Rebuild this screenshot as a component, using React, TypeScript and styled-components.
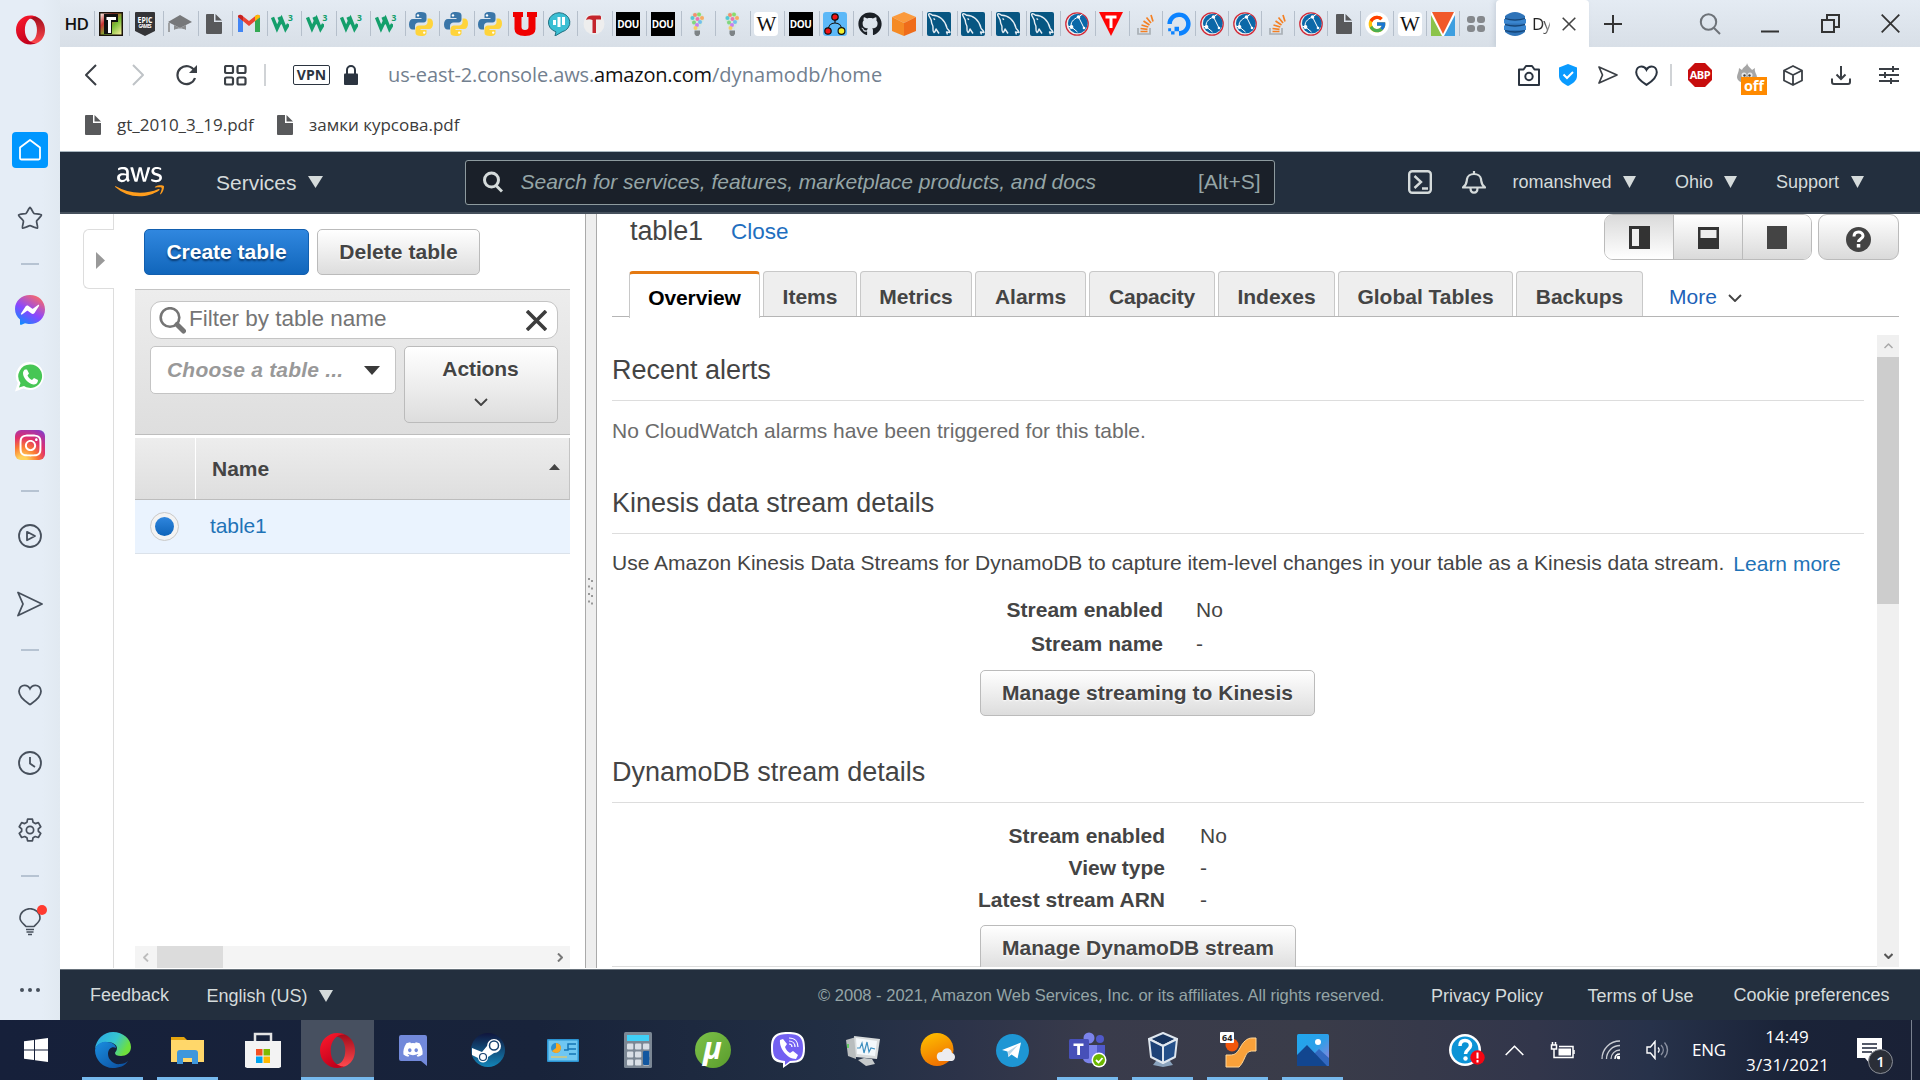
import React from "react";
import styled, { createGlobalStyle, css } from "styled-components";
import { FaAws, FaDiscord, FaGithub, FaInstagram, FaDigitalOcean } from "react-icons/fa";
import { FcGoogle } from "react-icons/fc";

const ARIAL = '"Liberation Sans", Arial, sans-serif';
const SEGOE = '"Open Sans", "Noto Sans", sans-serif';

const GlobalStyle = createGlobalStyle`
  *, *::before, *::after { box-sizing: border-box; }
  body { margin: 0; background: #fff; overflow: hidden; }
  svg { display: block; flex: none; }
`;

/* ---------- shell ---------- */

const Screen = styled.div`
  width: 1920px; height: 1080px; display: flex; flex-direction: column;
  overflow: hidden; font-family: ${ARIAL}; white-space: nowrap; color: #444;
`;
const BrowserWindow = styled.div`
  height: 1020px; display: flex; background: linear-gradient(#e4ebf3, #e5ecf5);
`;
const BrowserMain = styled.div`
  flex: 1; min-width: 0; display: flex; flex-direction: column;
`;

/* ---------- opera sidebar ---------- */

const SideBar = styled.nav`
  width: 60px; height: 1020px; display: flex; flex-direction: column; align-items: center;
  background: linear-gradient(90deg, #e5edf6 70%, #e1e9f1);
`;
const SideSlot = styled.div<{ $h: number }>`
  position: relative; width: 60px; height: ${p => p.$h}px; flex: none;
  display: flex; align-items: center; justify-content: center; color: #47505c;
`;
const SideRule = styled.i`
  width: 18px; height: 2px; background: #b6c3d2;
`;
const HomeTile = styled.div`
  width: 36px; height: 36px; margin: 72px 0 18px; flex: none; border-radius: 4px; background: #0097ff;
  display: flex; align-items: center; justify-content: center;
`;
const InstaTile = styled.div`
  width: 30px; height: 30px; border-radius: 6px; color: #fff;
  display: flex; align-items: center; justify-content: center;
  background: radial-gradient(circle at 25% 105%, #ffd35a 0 12%, #fb7a33 38%, #e0306c 62%, #9b36b7 88%, #5b57d3);
`;
const AlertDot = styled.i`
  position: absolute; top: 16px; left: 37px; width: 10px; height: 10px; border-radius: 50%; background: #ff3b30;
`;

/* ---------- tab strip ---------- */

const TabStrip = styled.div`
  height: 47px; display: flex; background: linear-gradient(#e4ebf3, #d8dfe7);
`;
const PinnedTab = styled.div<{ $w: number; $rule?: boolean }>`
  width: ${p => p.$w}px; height: 25px; margin-top: 11px; flex: none; display: flex; align-items: center;
  padding-left: 3.5px;
  border-left: ${p => (p.$rule === false ? "0" : "1.5px")} solid #b5bfcb;
`;
const PinnedText = styled.span`
  padding-left: 1px; font: 600 17px/25px ${SEGOE}; letter-spacing: -0.8px; color: #111;
`;
const ActiveTab = styled.div`
  width: 93px; height: 47px; background: #fff; border-radius: 4px 4px 0 0; display: flex; align-items: center;
  padding-left: 8px; box-shadow: -2px 0 4px rgba(160, 175, 190, .35);
`;
const ActiveTitle = styled.span`
  width: 18px; margin: 0 12px 0 6px; overflow: hidden; font: 17px/26px ${SEGOE}; letter-spacing: -1px;
  background: linear-gradient(90deg, #222 50%, #999); -webkit-background-clip: text; color: transparent;
`;
const WindowButtons = styled.div`
  flex: 1; display: flex; align-items: center; color: #333;
`;
const Gap = styled.i<{ $w: number }>`
  width: ${p => p.$w}px; flex: none;
`;
const FavText = styled.b<{ $bg: string; $fg: string; $size: number; $r?: number; $serif?: boolean; $regular?: boolean }>`
  width: 24px; height: 24px; flex: none; display: block; text-align: center; overflow: hidden;
  background: ${p => p.$bg}; color: ${p => p.$fg}; border-radius: ${p => p.$r || 0}px;
  font: ${p => (p.$regular ? 400 : 700)} ${p => p.$size}px/24px ${p => (p.$serif ? '"Liberation Serif", serif' : SEGOE)};
  letter-spacing: ${p => (p.$size < 11 ? "-0.4px" : "-1px")};
`;
const FavW3 = styled.span`
  width: 24px; height: 24px; flex: none; display: flex; color: #149f6b;
  sup { font: 700 8.5px/12px ${SEGOE}; margin-left: -1px; }
`;

/* ---------- address bar ---------- */

const AddressBar = styled.div`
  height: 56px; background: #fff; display: flex; align-items: center; color: #3a3f45;
`;
const BarRule = styled.i`
  width: 2px; height: 22px; background: #d0d3d6; flex: none;
`;
const VpnBadge = styled.span`
  width: 37px; height: 20px; border: 1.5px solid #2b3440; border-radius: 2px; text-align: center;
  font: 700 14px/17px ${SEGOE}; letter-spacing: 0; color: #2b3440;
`;
const Url = styled.span`
  font: 20px/30px ${SEGOE}; letter-spacing: -0.12px; color: #72808f; width: 1130px;
  b { font-weight: 400; color: #111; letter-spacing: -0.2px; }
  i { font-style: normal; letter-spacing: 0.07px; }
`;
const AbpBadge = styled.span`
  width: 24px; height: 24px; background: #c70d0d; color: #fff; text-align: center;
  clip-path: polygon(29% 0, 71% 0, 100% 29%, 100% 71%, 71% 100%, 29% 100%, 0 71%, 0 29%);
  font: 700 11px/24px ${SEGOE}; letter-spacing: -0.4px;
`;
const FlameSlot = styled.span`
  position: relative; width: 30px; height: 32px; flex: none; padding-top: 4px;
`;
const OffBadge = styled.b`
  position: absolute; left: 4px; top: 18px; width: 26px; height: 18px; background: #ff8a00; color: #fff;
  text-align: center; font: 700 14.5px/17px ${SEGOE};
`;
const Bookmarks = styled.div`
  height: 48px; background: #fff; display: flex; align-items: center; padding: 0 0 4px 25px;
`;
const Bookmark = styled.span<{ $w: number }>`
  width: ${p => p.$w}px; display: flex; align-items: center; gap: 16px;
  font: 17px/26px ${SEGOE}; letter-spacing: 0; color: #3b3b3b;
`;

/* ---------- aws header / footer ---------- */

const AwsHeader = styled.header`
  height: 63px; background: #232f3e; border-top: 1px solid #a9b7c0; border-bottom: 2px solid #46515d;
  display: flex; align-items: center; color: #d5dbdb; font-size: 18px;
`;
const NavLabel = styled.span<{ $size: number; $w: number; $drop?: number }>`
  width: ${p => p.$w}px; font-size: ${p => p.$size}px; line-height: 30px; padding-top: ${p => p.$drop || 0}px;
`;
const SearchBox = styled.div`
  width: 810px; height: 45px; background: #1a2029; border: 1px solid #8d9a9e; border-radius: 3px;
  display: flex; align-items: center; color: #95a5a6; font-size: 21px; line-height: 30px; padding: 0 13px 0 17px;
  svg { margin-bottom: 1px; }
  em { flex: 1; margin-left: 18px; letter-spacing: -0.02px; }
`;
const AwsFooter = styled.footer`
  height: 51px; background: #232f3e; border-top: 1px solid #69737c; color: #d5dbdb;
  display: flex; padding: 9px 0 0 30px; font-size: 18px; line-height: 32px;
`;
const FooterLabel = styled.span<{ $w: number; $up?: boolean }>`
  width: ${p => p.$w}px; padding-top: ${p => (p.$up ? 0 : 1)}px;
`;
const FooterCaret = styled.span`
  width: 14px; padding-top: 11px;
`;
const Copyright = styled.small`
  width: 613px; font-size: 16.5px; color: #95a5a6; letter-spacing: 0.01px; padding-top: 0;
`;

/* ---------- console body ---------- */

const Console = styled.main`
  height: 755px; background: #fff; display: flex; overflow: hidden; font-size: 21px;
`;
const Rail = styled.div`
  width: 54px; height: 754px; display: flex; flex-direction: column;
`;
const RailEdge = styled.i<{ $h?: number }>`
  ${p => (p.$h ? css`height: ${p.$h}px;` : css`flex: 1;`)}
  border-right: 1px solid #ddd;
`;
const RailHandle = styled.div`
  height: 60px; margin-left: 23px; border: 1.5px solid #ddd; border-right: 0; border-radius: 6px 0 0 6px;
  padding: 22px 0 0 12px;
`;
const ListPane = styled.section`
  width: 471px; height: 754px; padding: 15px 15px 0 21px; display: flex; flex-direction: column;
`;
const ButtonRow = styled.div`
  display: flex; gap: 8px; height: 60px; padding-left: 9px; flex: none;
`;
const Button = styled.button<{ $w: number; $h?: number; $primary?: boolean; $ls?: number }>`
  width: ${p => p.$w}px; height: ${p => p.$h || 46}px; flex: none; padding: 0; border-radius: 5px;
  display: flex; flex-direction: column; align-items: center;
  font: 700 21px/44px ${ARIAL}; letter-spacing: ${p => p.$ls || 0}px;
  ${p => p.$primary
    ? css`color: #fff; border: 1px solid #125faf; background: linear-gradient(#3087df, #1166bb); text-shadow: 0 2px 2px #0a3a70;`
    : css`color: #444; border: 1px solid #bbb; background: linear-gradient(#fff, #ddd); text-shadow: 0 1px 2px #fff;`}
`;
const FilterPanel = styled.div`
  height: 146px; flex: none; border-top: 1px solid #c4c4c4; border-bottom: 1px solid #bdbdbd;
  background: linear-gradient(#ededed, #dedede); padding: 11px 12px 0 15px;
`;
const FilterInput = styled.div`
  height: 38px; border: 1px solid #c4c4c4; border-radius: 11px; background: #fff; display: flex; align-items: center;
  padding: 0 10px 0 8px; font-size: 22.5px; color: #757575;
  span { flex: 1; margin-left: 3px; padding-bottom: 2px; }
`;
const FilterRow = styled.div`
  display: flex; gap: 8px; margin-top: 7px;
`;
const Select = styled.div`
  width: 246px; height: 48px; border: 1px solid #c4c4c4; border-radius: 5px; background: #fff;
  display: flex; align-items: center; padding: 0 15px 0 16px;
  font: italic 700 21px/46px ${ARIAL}; letter-spacing: .2px; color: #999;
  span { flex: 1; }
`;
const ActionsButton = styled(Button)`
  line-height: 44px; padding-right: 1px;
  svg { margin-top: 7px; }
`;
const TableHead = styled.div`
  height: 62px; flex: none; margin-top: 3px; border-bottom: 1px solid #bdbdbd; border-right: 1px solid #c4c4c4;
  background: linear-gradient(#ededed, #dedede); display: flex; font-weight: 700;
`;
const HeadRadioCell = styled.div`
  width: 61px; border-right: 1px solid #fff;
`;
const HeadNameCell = styled.div`
  flex: 1; display: flex; align-items: center; justify-content: space-between; padding: 0 9px 0 16px; line-height: 60px;
  svg { margin-bottom: 2px; }
`;
const TableRow = styled.div`
  height: 54px; flex: none; background: #eaf3fe; border-bottom: 1px solid #dbe2ea; display: flex; align-items: center;
  padding-left: 15px; color: #1f73b7;
  span { margin-left: 31px; letter-spacing: -0.1px; line-height: 50px; padding-bottom: 2px; }
`;
const Radio = styled.i`
  width: 29px; height: 29px; border-radius: 50%; border: 1px solid #c9c9c9; background: #f3f3f3;
  display: flex; align-items: center; justify-content: center;
  &::after { content: ""; width: 19px; height: 19px; border-radius: 50%; background: linear-gradient(#2f86de, #0f64b9); }
`;
const HScroll = styled.div`
  height: 22px; margin-top: auto; background: #f4f4f4; display: flex; align-items: center; justify-content: space-between;
  padding: 0 7px 0 8px;
`;
const HThumb = styled.i`
  width: 66px; height: 22px; background: #dcdcdc; margin: 0 auto 0 8px;
`;
const Splitter = styled.div`
  width: 12px; height: 754px; border: 1px solid #aaa; border-width: 0 1px; background: #eee;
  display: flex; flex-direction: column; align-items: center; justify-content: center;
`;

const DetailPane = styled.section`
  flex: 1; height: 755px; display: flex; flex-direction: column; padding: 0 21px 0 15px;
`;
const TitleRow = styled.div`
  height: 57px; flex: none; display: flex; padding-left: 18px; line-height: 34px;
`;
const Title = styled.h1`
  margin: 0; width: 101px; font: 400 27px/34px ${ARIAL}; letter-spacing: -0.1px;
`;
const CloseLink = styled.a`
  flex: 1; font-size: 22.5px; line-height: 36px; color: #1f6fbf;
`;
const Segments = styled.div`
  display: flex; height: 46px; width: 208px; border: 1px solid #bbb; border-radius: 9px; overflow: hidden;
`;
const Segment = styled.div<{ $on?: boolean }>`
  flex: 1; display: flex; justify-content: center; padding-top: 11px;
  background: linear-gradient(${p => (p.$on ? "#dadada, #fff" : "#fff, #dadada")});
  & + & { border-left: 1px solid #bbb; }
`;
const HelpButton = styled.div`
  width: 81px; height: 46px; margin-left: 6px; border: 1px solid #bbb; border-radius: 9px;
  background: linear-gradient(#fff, #dadada); display: flex; justify-content: center; padding-top: 12px;
`;
const Tabs = styled.div`
  height: 46px; flex: none; border-bottom: 1px solid #b5b5b5; display: flex; gap: 3px; padding-left: 17px;
`;
const Tab = styled.div<{ $w: number; $on?: boolean; $ls?: number }>`
  width: ${p => p.$w}px; flex: none; height: 45px; text-align: center; font-weight: 700; line-height: 36px; padding-top: 7px;
  border: 1px solid #c8c8c8; border-bottom: 0; border-radius: 4px 4px 0 0; background: #eee;
  letter-spacing: ${p => p.$ls || 0}px;
  ${p => p.$on && css`height: 47px; background: #fff; color: #000; border-top: 3px solid #e47911; padding-top: 6px;`}
`;
const MoreTab = styled.a`
  display: flex; align-items: center; gap: 11px; margin-left: 23px; line-height: 36px; padding-top: 6px; color: #1c62b8;
  svg { margin-top: 2px; }
`;
const DetailScroll = styled.div`
  height: 650px; padding-top: 18px; display: flex; justify-content: space-between; border-bottom: 1px solid #ddd;
`;
const DetailBody = styled.div`
  width: 1252px; height: 632px; overflow: hidden;
`;
const SectionTitle = styled.h2`
  margin: 0; height: 66px; padding-top: 18px; border-bottom: 1px solid #ddd;
  font: 400 27px/34px ${ARIAL}; letter-spacing: -.02px;
`;
const Paragraph = styled.p<{ $h: number; $muted?: boolean }>`
  margin: 0; height: ${p => p.$h}px; padding-top: ${p => (p.$muted ? 15 : 14)}px; line-height: 30px; color: ${p => (p.$muted ? "#6c6c6c" : "#444")};
`;
const LearnMore = styled.a`
  color: #1f73b7; margin-left: 9px; position: relative; top: 1px;
`;
const Fields = styled.dl<{ $label: number; $line: number; $top: number; $gap: number }>`
  margin: 0; padding-top: ${p => p.$top}px; display: grid; line-height: ${p => p.$line}px;
  grid-template-columns: ${p => p.$label}px auto; column-gap: ${p => p.$gap}px;
  dt { text-align: right; font-weight: 700; }
  dd { margin: 0; }
`;
const FieldAction = styled.div<{ $h: number }>`
  padding: 9px 0 0 368px; height: ${p => p.$h}px;
`;
const VScroll = styled.div`
  width: 22px; height: 632px; background: #f0f0f0; display: flex; flex-direction: column; align-items: center;
`;
const VThumb = styled.i`
  width: 22px; height: 247px; background: #cdcdcd; margin-bottom: auto;
`;
const ArrowCell = styled.i`
  height: 22px; display: flex; align-items: center;
`;

/* ---------- windows taskbar ---------- */

const TaskBar = styled.div`
  height: 60px; display: flex; color: #fff;
  background: linear-gradient(90deg, #16203a 0, #18233a 28%, #222f44 44%, #2c3349 50%, #393b4b 57%, #3a3c49 68%, #32364b 80%, #27324a 86%, #1a2338 93%, #1a2136 100%);
`;
const LogoBox = styled.span`
  width: 24px; height: 60px; margin: 0 27px 0 24px; display: flex; align-items: center;
`;
const TaskSlot = styled.div<{ $open?: boolean; $active?: boolean }>`
  width: ${p => (p.$active ? 73 : 61)}px; height: 60px; margin: 0 ${p => (p.$active ? 1 : 7)}px; flex: none; display: flex;
  align-items: center; justify-content: center; border-top: 3px solid transparent;
  border-bottom: 3px solid ${p => (p.$open || p.$active ? "#76b9ed" : "transparent")};
  ${p => p.$active && css`background: #475060; border-top-color: #475060;`}
`;
const MuText = styled.span`
  width: 36px; height: 36px; border-radius: 50%; background: linear-gradient(135deg, #7cc24a, #5b9c2c); color: #fff; text-align: center;
  font: italic 700 31px/30px ${SEGOE};
`;
const Tray = styled.div`
  display: flex; align-items: center; font-family: ${SEGOE}; font-size: 17px;
`;
const Language = styled.span`
  width: 54px; margin-left: 23px; line-height: 24px; letter-spacing: -.3px;
`;
const Clock = styled.div`
  width: 82px; line-height: 28px; text-align: center; padding-top: 1px;
  span { letter-spacing: .3px; }
`;
const NoticeSlot = styled.span`
  position: relative; width: 55px; height: 60px; margin-left: 29px; padding-top: 18px; border-right: 1.5px solid #7a8190;
`;
const NoticeCount = styled.b`
  position: absolute; left: 11px; top: 29px; width: 25px; height: 25px; border-radius: 50%; background: #2a2e37;
  border: 1px solid #8b8f98; text-align: center; font: 600 15px/22px ${SEGOE};
`;

/* ---------- icons ---------- */

type IconProps = { w: number; h?: number; box?: string; fill?: string; stroke?: string; sw?: number; children: React.ReactNode };
const Icon = ({ w, h = w, box, fill = "none", stroke = "currentColor", sw = 1.8, children }: IconProps) => (
  <svg width={w} height={h} viewBox={box || `0 0 ${w} ${h}`} fill={fill} stroke={stroke} strokeWidth={sw}>{children}</svg>
);

const OperaO = ({ w, h, id }: { w: number; h: number; id: string }) => (
  <Icon w={w} h={h} box="0 0 36 36" stroke="none">
    <defs>
      <linearGradient id={id} x1="0" y1="0" x2="0.5" y2="1"><stop offset="0" stopColor="#ff1b2d" /><stop offset="1" stopColor="#c1001c" /></linearGradient>
      <linearGradient id={id + "r"} x1="0" y1="0" x2="0" y2="1"><stop offset="0" stopColor="#a10b1a" /><stop offset="1" stopColor="#ff4a4f" /></linearGradient>
    </defs>
    <g transform="scale(1 .857)">
      <path fill={`url(#${id}r)`} d="M14 5c3-4 8-5 12-3 6 3 10 10 10 19s-4 16-10 19c-4 2-9 1-12-3 7 3 12-5 12-16S21 2 14 5z" />
      <path fillRule="evenodd" fill={`url(#${id})`} d="M18 0C8 0 0 9 0 21s8 21 18 21c3 0 6-1 8-2-8 1-15-6-15-19S18 1 26 2C24 1 21 0 18 0z" />
    </g>
  </Icon>
);
const Doc = () => (
  <Icon w={16} h={20} stroke="none"><path fill="#58595b" d="M1 0h7v8h8v11a1 1 0 0 1-1 1H1a1 1 0 0 1-1-1V1a1 1 0 0 1 1-1z" /><path fill="#58595b" d="M9.500 0 16 6.500H9.500z" /></Icon>
);
const Lines = ({ d, w, h = w, sw = 1.8, c = "currentColor" }: { d: string; w: number; h?: number; sw?: number; c?: string }) => (
  <Icon w={w} h={h} stroke={c} sw={sw}><path d={d} strokeLinejoin="round" /></Icon>
);
const Down = ({ w, h, c = "#d5dbdb" }: { w: number; h: number; c?: string }) => (
  <Icon w={w} h={h} stroke="none"><path fill={c} d={`M0 0H${w}L${w / 2} ${h}z`} /></Icon>
);
const Python = () => (
  <Icon w={24} stroke="none">
    <path fill="#3a76a8" d="M12 0C6.500 0 6.500 2 6.500 3.500V6H12.500v1H4C1.500 7 0 9 0 12.500S1.500 17.500 3.500 17.500H6V14c0-2 1.500-3.500 3.500-3.500h5c2 0 3-1.500 3-3.200v-4C17.500 1 15.500 0 12 0z" />
    <path fill="#ffd43b" d="M12 24c5.500 0 5.500-2 5.500-3.500V18h-6v-1H20c2.500 0 4-2 4-5.500S22.500 6.500 20.500 6.500H18.500V10c0 2-1.500 3.500-3.500 3.500h-5c-2 0-3.500 1.500-3.500 3.200v4C6.500 23 8.500 24 12 24z" />
    <circle cx="9" cy="3.400" r="1.200" fill="#fff" /><circle cx="15.200" cy="20.600" r="1.200" fill="#fff" />
  </Icon>
);
const W3 = () => (
  <FavW3><Icon w={18} h={24} stroke="#149f6b" sw={3.400}><path d="M1.500 5.500 6 16.500 10.500 7l4 10 3-5" strokeLinejoin="miter" /><path d="M8 5l3 7" /></Icon><sup>3</sup></FavW3>
);
const Bulb = () => (
  <Icon w={24} stroke="none">
    <path fill="#d3e6dd" d="M12 0c4 0 7 3 7 6.500 0 4-4 6-4 11H9.500c0-5-4.500-7-4.500-11C5 3 8 0 12 0z" />
    {([["#f77f5c", 10, 3], ["#7ed957", 14, 2.5], ["#3cc3d6", 7.5, 6], ["#f05fa9", 12.5, 7], ["#ffa04d", 17, 6], ["#71d36f", 9, 10.5], ["#5fb7f0", 15, 10], ["#c46bf2", 12, 13], ["#ffc94f", 10.5, 16]] as [string, number, number][]).map(([c, x, y], i) =>
      <circle key={i} cx={x} cy={y} r="2" fill={c} opacity=".85" />)}
    <path fill="#7d8386" d="M9.500 18.500h5.500V22l-1.500 2h-2.500l-1.500-2z" />
  </Icon>
);
const MySql = () => (
  <Icon w={24} stroke="#e6eef4" sw={1.4}>
    <rect width="24" height="24" rx="2" fill="#075682" stroke="none" />
    <path strokeLinejoin="round" d="M1.500 2c1.500-.6 3 .3 4 1.200C12 3 18 8 20 16c.5 1.500 2.500 2.500 3 4.500l-3.500-.5 1 2.500M1.500 2c0 3 3 4 3 8 0 2 1.500 3 1.500 5s-.500 4 1 5.500c1.500-.5 1.500-2.500 2-3.500l3 4.500" />
    <path d="M6.500 6.500l1.500 1.200" />
  </Icon>
);
const Globe = () => (
  <Icon w={24} stroke="none">
    <circle cx="12" cy="12" r="11.200" fill="#e9eef2" stroke="#d22b38" strokeWidth="1.300" /><circle cx="12.800" cy="11.500" r="9.800" fill="#0b68a8" />
    <path d="M13.500 5C8 7 5 11 6.500 15l6 5M13.500 5l5.500 11M6.500 15l-4-1M13.500 5l4-3" stroke="#fff" strokeWidth="1" fill="none" />
    <circle cx="13.500" cy="5" r="1.800" fill="#fff" /><circle cx="6.500" cy="15" r="1.900" fill="#fff" /><circle cx="19" cy="16" r="1.300" fill="#fff" />
  </Icon>
);
const StackO = () => (
  <Icon w={24} stroke="#f48024" sw={1.7}>
    <path d="M4 16v6h12v-6" stroke="#a9b0b6" /><path d="M6.500 19.500h7M6.500 16.500l7 .8M7.500 13l6.800 2M9.500 9l6 4M12.500 5.500l4.500 5.500M17 3l2 6.500" />
  </Icon>
);

const favicons: React.ReactNode[] = [
  <Icon w={24} stroke="none"><defs><linearGradient id="rain" x1="0" y1="0" x2="1" y2="1"><stop offset="0" stopColor="#f7f3e8" /><stop offset=".3" stopColor="#c33" /><stop offset=".6" stopColor="#7b3" /><stop offset="1" stopColor="#fbf3a0" /></linearGradient></defs><rect width="24" height="24" fill="#1c140c" /><rect x="1.500" y="1.500" width="21" height="21" fill="url(#rain)" /><path fill="#111" d="M5 2h14v8h-6v12H5z" /><path fill="#fff" d="M7.500 5H17v3h-5v13H9V8H7.500z" /></Icon>,
  <Icon w={24} stroke="none"><path fill="#343437" d="M3 0h18a1 1 0 0 1 1 1v18l-10 5L2 19V1a1 1 0 0 1 1-1z" /><g fill="#fff" fontFamily="Open Sans" fontWeight="700"><text x="4.500" y="10.500" fontSize="9.500" textLength="15" lengthAdjust="spacingAndGlyphs">EPIC</text><text x="5.500" y="16" fontSize="4.500" textLength="13">GAMES</text></g></Icon>,
  <Icon w={24} stroke="none"><path fill="#77787a" d="M12 3 24 10 12 16 0 10z" /><path fill="#8b8c8e" d="M6 13v5c3-2 9-2 12 0v-5l-6 3z" /><path d="M1 11v9" stroke="#888" strokeWidth="1.500" /></Icon>,
  <Doc />,
  <Icon w={24} stroke="none"><path fill="#4285f4" d="M1 20V5l5 4v11z" /><path fill="#34a853" d="M18 20V9l5-4v15z" /><path fill="#ea4335" d="M1 5c0-2 2-3 4-1.500L12 9l7-5.500C21 2 23 3 23 5l-11 9z" /><path fill="#c5221f" d="M1 5c0-2 2-3 4-1.500L6 4v5z" /><path fill="#fbbc04" d="M18 4l1-.5C21 2 23 3 23 5l-5 4z" /></Icon>,
  <W3 />, <W3 />, <W3 />, <W3 />, <Python />, <Python />, <Python />,
  <Icon w={24} stroke="none"><path fill="#f00000" d="M0 0h10v5H8.500v10q0 3 3.500 3t3.500-3V5H14V0h10v5h-1.500v12q0 7-10.500 7T1.500 17V5H0z" /></Icon>,
  <Icon w={24} stroke="#1f6f80" sw={1}><path fill="#3bbfd4" d="M12 .7a11 9.800 0 0 1 3 19.200L8 24l1-4.200A11 9.800 0 0 1 12 .7z" /><path stroke="#fff" strokeWidth="3" d="M7.500 8v5M12 5v10M16.500 5v8" /></Icon>,
  <Icon w={24} stroke="none"><circle cx="12" cy="12" r="10.500" fill="#eee" /><path fill="#c4252c" d="M4 8c1-4 4-5 8-4.500h6l1 1v3h-5V21h-3.500V8C8 7 6 7 4 8z" /></Icon>,
  <FavText $bg="#000" $fg="#fff" $size={10}>DOU</FavText>,
  <FavText $bg="#000" $fg="#fff" $size={10}>DOU</FavText>,
  <Bulb />, <Bulb />,
  <FavText $bg="#fff" $fg="#111" $size={21} $r={4} $serif $regular>W</FavText>,
  <FavText $bg="#000" $fg="#fff" $size={10}>DOU</FavText>,
  <Icon w={24} stroke="#111" sw={1.2}><rect width="24" height="24" rx="3" fill="#5cb8f7" stroke="none" /><path d="M12 5v6M5 19c0-5 3-8 7-8s7 3 7 8" /><circle cx="12" cy="5" r="3.200" fill="#f01414" /><circle cx="5" cy="19" r="3.200" fill="#f01414" /><circle cx="18.500" cy="19" r="3.400" fill="#f3ef2c" /></Icon>,
  <FaGithub size={24} color="#1b2026" />,
  <Icon w={24} stroke="none"><path fill="#fb9a3c" d="M12 0l12 5-12 6L0 5z" /><path fill="#f58a24" d="M0 5l12 6v13L0 19z" /><path fill="#ef6c1a" d="M24 5l-12 6v13l12-5z" /></Icon>,
  <MySql />, <MySql />, <MySql />, <MySql />, <Globe />,
  <Icon w={24} stroke="none"><path fill="#ff0505" d="M0 0h24L12 24z" /><path fill="#fff" d="M6.500 3.500h11v3h-4V16h-3V6.500h-4z" /></Icon>,
  <StackO />,
  <FaDigitalOcean size={24} color="#0c83ff" />,
  <Globe />, <Globe />, <StackO />, <Globe />, <Doc />,
  <Icon w={24} stroke="none"><circle cx="12" cy="12" r="12" fill="#fff" /><g transform="translate(2 2)"><FcGoogle size={20} /></g></Icon>,
  <FavText $bg="#fff" $fg="#111" $size={21} $r={4} $serif $regular>W</FavText>,
  <Icon w={24} stroke="none"><rect width="24" height="24" fill="#fff" /><path fill="#f1592a" d="M1 0h22L12 22z" /><path fill="#8bc34a" d="M0 3l11 21H0z" /><path fill="#3d9fe0" d="M24 3v21H13z" /></Icon>,
  <Icon w={24} stroke="none" fill="#85888c"><rect x="3" y="4" width="8" height="7" rx="3" /><rect x="13" y="4" width="8" height="7" rx="3" /><rect x="3" y="13" width="8" height="7" rx="3" /><rect x="13" y="13" width="8" height="7" rx="3" /></Icon>,
];
const narrow = new Set([3, 36]);

const DynamoIcon = () => (
  <Icon w={22} h={24} stroke="none">
    <path fill="#2e73b8" d="M1 4Q11-4 21 4v16q-10 8-20 0z" /><path fill="#3a86cf" d="M0 7h22v4.500H0zM0 13.500h22V18H0z" />
    <path d="M1 6.500q10 3 20 0M1 12.500q10 3 20 0M1 18.500q10 3 20 0" stroke="#154476" strokeWidth="1.300" fill="none" />
  </Icon>
);

const taskApps: { icon: React.ReactNode; open?: boolean; active?: boolean }[] = [
  { open: true, icon: <Icon w={36} stroke="none"><defs><linearGradient id="edgeTop" x1="0" y1="0" x2="1" y2=".4"><stop offset="0" stopColor="#2aa5e8" /><stop offset=".6" stopColor="#36c6d0" /><stop offset="1" stopColor="#6ee03c" /></linearGradient><linearGradient id="edgeLow" x1="0" y1="0" x2="1" y2="1"><stop offset="0" stopColor="#1a8ee0" /><stop offset="1" stopColor="#0b4c9c" /></linearGradient></defs><path fill="url(#edgeTop)" d="M0 17C1 7 9 0 18 0c10 0 18 7 18 15 0 6-5 9-10 9-4 0-6-1-6-3 0-1 2-2 2-5 0-3-4-6-10-6C6 10 2 13 0 17z" /><path fill="url(#edgeLow)" d="M0 18c1-5 6-9 12-8 5 0 9 3 9 6-4-2-8 1-8 6 0 6 6 11 12 10 3 0 6-1 8-3-3 5-9 7-15 7C8 36 0 28 0 18z" /></Icon> },
  { open: true, icon: <Icon w={33} h={28} stroke="none"><path fill="#e5a50e" d="M0 1h13l3 3v5H0z" /><path fill="#ffd76a" d="M0 4h33v22H0z" /><path fill="#3e97dc" d="M6 28V17a3 3 0 0 1 3-3h15a3 3 0 0 1 3 3v11h-6v-6h-9v6z" /></Icon> },
  { icon: <Icon w={36} stroke="none"><path d="M10 10V2h16v8" fill="none" stroke="#e4e4e4" strokeWidth="2.500" /><path fill="#f3f3f3" d="M0 9h36v26l-2 1H2l-2-1z" /><path fill="#f25022" d="M11 17h6.500v6.500H11z" /><path fill="#7fba00" d="M18.500 17H25v6.500h-6.500z" /><path fill="#00a4ef" d="M11 24.500h6.500V31H11z" /><path fill="#ffb900" d="M18.500 24.500H25V31h-6.500z" /></Icon> },
  { active: true, icon: <OperaO w={35} h={35} id="opTask" /> },
  { icon: <Icon w={28} h={31} stroke="none"><path fill="#7289da" d="M2 0h24a2 2 0 0 1 2 2v29l-6-5H2a2 2 0 0 1-2-2V2a2 2 0 0 1 2-2z" /><g transform="translate(3.500 4)"><FaDiscord size={21} color="#fff" /></g></Icon> },
  { icon: <Icon w={34} h={34} stroke="none"><defs><linearGradient id="steam" x1="0" y1="0" x2="0" y2="1"><stop offset="0" stopColor="#10153c" /><stop offset="1" stopColor="#1385b8" /></linearGradient></defs><circle cx="17" cy="17" r="17" fill="url(#steam)" /><path fill="#fff" d="M1 15l10 4 5-6a7 7 0 1 1 7 7l-6 4a5 5 0 0 1-10 1L1 22z" /><circle cx="23" cy="12.500" r="4.500" fill="#fff" stroke="#16416f" strokeWidth="1.500" /><circle cx="12" cy="24" r="3.500" fill="#fff" stroke="#16416f" strokeWidth="1.200" /></Icon> },
  { icon: <Icon w={32} h={23} stroke="none"><rect width="32" height="23" rx="1" fill="#2b93d1" /><rect x="1.500" y="1.500" width="29" height="20" fill="#6fc7f2" /><circle cx="9" cy="9" r="5" fill="#2d8fd0" /><path fill="#f7a823" d="M9 9V4a5 5 0 1 1-4 8z" /><path stroke="#1575b5" strokeWidth="1.500" fill="none" d="M17 11h4V5h8M21 10h8M22 15h7" /><path stroke="#d7c97a" strokeWidth="1.500" d="M4 18h16" /></Icon> },
  { icon: <Icon w={28} h={36} stroke="none"><rect width="28" height="36" rx="1.500" fill="#7b8794" /><rect x="3" y="3" width="22" height="6" fill="#40d0f7" />{[0, 1, 2].map(r => [0, 1, 2].map(c => <rect key={`${r}${c}`} x={3 + c * 8} y={11.5 + r * 8} width="6.300" height="6" rx="1" fill="#d9dfe6" />))}<rect x="19" y="19" width="6.300" height="14" rx="1" fill="#1257a0" /></Icon> },
  { icon: <MuText>µ</MuText> },
  { icon: <Icon w={34} h={36} stroke="none"><path fill="#fff" d="M17 0c14 0 17 5 17 16s-3 15-15 15l-7 5v-5C2 30 0 26 0 16 0 5 3 0 17 0z" /><path fill="#7360f2" d="M17 2c12 0 15 4 15 14s-3 13-13 13l-5 4v-4C4 28 2 25 2 16 2 6 5 2 17 2z" /><path fill="#fff" d="M9 8l3-1 4 5-2 3c1 3 3 5 5 6l3-2 5 4-2 4c-9 0-17-11-16-19z" /><path d="M18 6c6 0 9 4 9 9M18 9c4 0 6 3 6 6M18 12c2 0 3 1 3 3" stroke="#fff" strokeWidth="1.200" fill="none" /></Icon> },
  { icon: <Icon w={34} h={32} stroke="none"><path fill="#b9bdbe" d="M0 6l10-3v22L2 22z" /><path fill="#d9dcdd" d="M8 2l26 3-3 20-21-2z" /><path fill="#f4f8fb" d="M10 4l21 3-2 15-18-2z" /><path d="M11 14l3 0 2-5 2 10 3-11 2 10 2-4 4 1" stroke="#3e8fc0" strokeWidth="1.200" fill="none" /><path fill="#c6cacb" d="M12 26l6-2 8 1 3 5-9 2z" /><path fill="#6c6" d="M1 10h2v4H1z" /></Icon> },
  { icon: <Icon w={36} h={34} stroke="none"><defs><linearGradient id="sun" x1="0" y1="0" x2=".4" y2="1"><stop offset="0" stopColor="#ffc400" /><stop offset="1" stopColor="#f07400" /></linearGradient></defs><circle cx="17" cy="16.500" r="16.500" fill="url(#sun)" /><path fill="#ececf0" d="M19 28a5.500 5.500 0 0 1-1-8c1-1 3-1 4-1 2-5 9-5 10 1 4 1 4 7 0 8z" /></Icon> },
  { icon: <Icon w={33} stroke="none"><circle cx="16.500" cy="16.500" r="16.500" fill="#1e96d4" /><path fill="#fff" d="M6 16 25 8.500l-3.500 16-6-4-3 2.500-1-5.500z" /><path fill="#b9d6e8" d="M12 17.500l10-6.500-7.500 8.500-2 3.500z" /></Icon> },
  { open: true, icon: <Icon w={38} h={36} stroke="none"><circle cx="20" cy="6" r="5.500" fill="#7b83eb" /><circle cx="31" cy="7" r="4" fill="#5059c9" /><path fill="#5059c9" d="M26 13h10v11c0 5-5 7-10 6z" /><path fill="#7b83eb" d="M14 13h14v13c0 7-14 7-14 0z" /><rect x="0" y="7" width="20" height="20" rx="1.500" fill="#4750b8" /><path fill="#fff" d="M4.500 11.500h10v2.500H11v9H8.200v-9H4.500z" /><circle cx="30" cy="28" r="7.500" fill="#fff" /><circle cx="30" cy="28" r="6" fill="#6bb700" /><path d="M27 28l2.500 2.500L33.500 26" stroke="#fff" strokeWidth="1.800" fill="none" /></Icon> },
  { open: true, icon: <Icon w={32} h={36} stroke="#dfe7ef" sw={2}><path fill="#8aa3bd" d="M9 29h14l3 4-10 2-10-2z" strokeWidth="0" /><path strokeLinejoin="round" fill="#17345f" d="M16 1l14 6-14 7L2 7z" /><path strokeLinejoin="round" fill="#1d4277" d="M2 7l14 7v17L4 25z" /><path strokeLinejoin="round" fill="#24508a" d="M30 7l-14 7v17l12-6z" /></Icon> },
  { open: true, icon: <Icon w={38} h={36} stroke="none"><circle cx="13" cy="13" r="6.500" fill="#f2560c" /><path fill="#f9a13a" d="M37 6v13h-3c-5 0-6 2-8 6-2 5-4 8-6 10H7V23h4c5 0 7-2 10-7 3-6 7-10 12-10z" stroke="#ffd79a" strokeWidth="1" /><rect x="1" width="14" height="11" rx="1" fill="#fff" /><text x="3" y="9" fontSize="9" fontWeight="700" fill="#222" fontFamily="Open Sans">64</text></Icon> },
  { open: true, icon: <Icon w={32} stroke="none"><defs><linearGradient id="sky" x1="0" y1="0" x2="1" y2="1"><stop offset="0" stopColor="#1fa7ee" /><stop offset=".5" stopColor="#2c9fe8" /><stop offset="1" stopColor="#9c7fd8" /></linearGradient></defs><rect width="32" height="32" rx="1.500" fill="url(#sky)" /><path fill="#3369c0" d="M16 21l6-6 10 9v8H20z" /><path fill="#12468f" d="M0 21 10 11l20 21H0z" /><circle cx="21" cy="8" r="3" fill="#fff" /></Icon> },
];

/* ---------- page ---------- */

const Sidebar = () => (
  <SideBar>
    <SideSlot $h={60}><OperaO w={29} h={30} id="opSide" /></SideSlot>
    <HomeTile><Icon w={24} stroke="#fff"><path d="M2 9.500 12 2l10 7.500V20a1.500 1.500 0 0 1-1.500 1.500h-17A1.500 1.500 0 0 1 2 20z" strokeLinejoin="round" /></Icon></HomeTile>
    <SideSlot $h={64}><Icon w={26} h={24}><path d="M13 1.500c1 0 3 5.500 4 6s7 .5 7.400 1.500S20 14 19.600 15s1.600 6.300.8 7-6.400-2.300-7.400-2.300-6.600 3-7.400 2.300S6.800 16 6.400 15 1.300 10 1.600 9 8 8 9 7.500 12 1.500 13 1.500z" /></Icon></SideSlot>
    <SideSlot $h={27}><SideRule /></SideSlot>
    <SideSlot $h={65}><Icon w={30} stroke="none"><defs><linearGradient id="msg" x1=".2" y1="1" x2=".8" y2="0"><stop offset="0" stopColor="#0a8dff" /><stop offset=".45" stopColor="#8a46ff" /><stop offset="1" stopColor="#ff6c60" /></linearGradient></defs><path fill="url(#msg)" d="M15 0C6.500 0 0 6 0 14c0 4.500 2 8 5 10.500V29c0 1 .5 1 1.500.700L10 28.300c1.500.4 3 .7 5 .7 8.500 0 15-6 15-14.500S23.500 0 15 0z" /><path fill="#fff" d="M6 18.500l4.500-7c.7-1 2-1.400 3-.6l3.500 2.600c.4.3.8.3 1.200 0l4.800-3.500c.6-.5 1.500.2 1 .9l-4.500 7c-.7 1-2 1.400-3 .6l-3.500-2.600c-.4-.3-.8-.3-1.200 0L7 19.500c-.600.500-1.500-.300-1-1z" /></Icon></SideSlot>
    <SideSlot $h={70}><Icon w={30} stroke="none"><path fill="#fff" d="M15.500 0a14 14 0 1 1-7 26.500L0 29.500l2.800-8.500A14 14 0 0 1 15.500 0z" /><path fill="#47c655" d="M15.500 2.500a11.700 11.700 0 1 1-6.500 21.500L4 25.500 5.500 21A11.700 11.700 0 0 1 15.500 2.500z" /><path fill="#fff" d="M10 7.500h2l2 4-1.500 2c1 2 2.500 3.500 4.500 4.500l2-2 4 2c0 3-2 4.500-4.500 4.500C13 21.500 8 16 8 11c0-1.500 1-3 2-3.500z" /></Icon></SideSlot>
    <SideSlot $h={66}><InstaTile><FaInstagram size={25} /></InstaTile></SideSlot>
    <SideSlot $h={26}><SideRule /></SideSlot>
    <SideSlot $h={63}><Icon w={24}><circle cx="12" cy="12" r="11" /><path d="M9 7.800 17 12l-8 4.200z" strokeLinejoin="round" /></Icon></SideSlot>
    <SideSlot $h={73}><Lines w={26} h={26} d="M1 1.500 25 13 1 24.500 6 13z" /></SideSlot>
    <SideSlot $h={20}><SideRule /></SideSlot>
    <SideSlot $h={69}><Icon w={24} h={22}><path d="M12 20.500C8.500 18 1 14 1 7.300 1 3.700 3.700 1.300 6.600 1.300c2.400 0 4.400 1.400 5.400 3.400 1-2 3-3.400 5.400-3.400C20.300 1.300 23 3.700 23 7.300 23 14 15.500 18 12 20.500z" /></Icon></SideSlot>
    <SideSlot $h={67}><Icon w={24}><circle cx="12" cy="12" r="11" /><path d="M12 6v6.500l5 3.500" /></Icon></SideSlot>
    <SideSlot $h={67}><Icon w={24} box="0 0 25 25"><circle cx="12.500" cy="12.500" r="3.800" /><path strokeLinejoin="round" d="M10 1.200h5l.7 3.300 2.300 1.300 3.200-1 2.500 4.300-2.500 2.200v2.500l2.500 2.200-2.500 4.300-3.200-1-2.300 1.300-.7 3.200h-5l-.7-3.200L7 19.300l-3.200 1L1.300 16l2.500-2.200v-2.500L1.300 9.100l2.500-4.300 3.200 1 2.300-1.300z" /></Icon></SideSlot>
    <SideSlot $h={26}><SideRule /></SideSlot>
    <SideSlot $h={65}><Icon w={22} h={28} sw={1.6}><path d="M7 18.500C5 16 1 14 1 10a10 9.300 0 0 1 20 0c0 4-4 6-6 8.500zM7 21.500h8M7.500 24h7M9 26.500h4" /></Icon><AlertDot /></SideSlot>
    <SideSlot $h={72}><Icon w={20} h={4} stroke="none" fill="#47505c"><circle cx="2" cy="2" r="2" /><circle cx="10" cy="2" r="2" /><circle cx="18" cy="2" r="2" /></Icon></SideSlot>
  </SideBar>
);

const Strip = () => (
  <TabStrip>
    <PinnedTab $w={34} $rule={false}><PinnedText>HD</PinnedText></PinnedTab>
    {favicons.map((f, i) => (
      <PinnedTab key={i} $w={i < 30 ? 34.5 : i < 40 ? 33 : 37}>{narrow.has(i) && <Gap $w={4} />}{f}</PinnedTab>
    ))}
    <ActiveTab><DynamoIcon /><ActiveTitle>Dy</ActiveTitle><Lines w={14} d="M.7.7l12.600 12.600M13.300.7.7 13.300" sw={1.6} /></ActiveTab>
    <WindowButtons>
      <Gap $w={15} /><Lines w={18} d="M9 0v18M0 9h18" sw={2} />
      <Gap $w={77} /><Icon w={22} stroke="#6d7278" sw={2}><circle cx="9.500" cy="9" r="7.700" /><path d="M15 15l6 6" /></Icon>
      <Gap $w={40} /><Lines w={19} h={18} d="M0 16.500h18" sw={2} />
      <Gap $w={41} /><Icon w={19} sw={2}><path d="M1 6h12v12H1zM6 6V1h12v12h-5" /></Icon>
      <Gap $w={41} /><Lines w={19} d="M.7.7l17.600 17.600M18.300.7.7 18.300" sw={1.8} />
    </WindowButtons>
  </TabStrip>
);

const Toolbar = () => (
  <AddressBar>
    <Gap $w={23} /><Lines w={14} h={22} d="M13 1 3 11l10 10" sw={2} />
    <Gap $w={35} /><Lines w={14} h={22} d="M1 1l10 10L1 21" sw={2} c="#bfc3c7" />
    <Gap $w={30} /><Icon w={22} sw={2.2}><path d="M18.500 7a9 9 0 1 0 .5 7" /><path d="M21 1v8h-8z" fill="currentColor" stroke="none" /></Icon>
    <Gap $w={26} /><Icon w={23} h={21} sw={2.2}><rect x="1" y="1" width="8" height="7" rx="1.500" /><rect x="13.500" y="1" width="8" height="7" rx="1.500" /><rect x="1" y="12.500" width="8" height="7" rx="1.500" /><rect x="13.500" y="12.500" width="8" height="7" rx="1.500" /></Icon>
    <Gap $w={17} /><BarRule />
    <Gap $w={27} /><VpnBadge>VPN</VpnBadge>
    <Gap $w={14} /><Icon w={14} h={20} stroke="#2b3440" sw={2}><path d="M3 9V5a4 4 0 0 1 8 0v4" /><rect y="8.500" width="14" height="11.500" rx="1" fill="#2b3440" stroke="none" /></Icon>
    <Gap $w={30} /><Url>us-east-2.console.aws.<b>amazon.com</b><i>/dynamodb/home</i></Url>
    <Icon w={22} h={21} stroke="#2b3440" sw={2}><path d="M1 4.500h4.500L8 1h6l2.500 3.500H21V20H1z" strokeLinejoin="round" /><circle cx="11" cy="11.500" r="3.700" /></Icon>
    <Gap $w={19} /><Icon w={18} h={22} stroke="#fff" sw={2}><path d="M9 0l9 3.500V12c0 5-5 8-9 10-4-2-9-5-9-10V3.500z" fill="#0a9bff" stroke="none" /><path d="M4.500 10.500l3.500 3.500 6-6" /></Icon>
    <Gap $w={21} /><Lines w={20} h={18} d="M1 1l18 8L1 17l3.500-8z" sw={1.7} />
    <Gap $w={17} /><Icon w={23} h={21} stroke="#2b3440" sw={2}><path d="M11.500 19.800C8 17.500 1.200 13.500 1.200 7.200c0-3.500 2.500-5.700 5.200-5.700 2.400 0 4.200 1.300 5.100 3.200 1-1.900 2.700-3.200 5.100-3.200 2.700 0 5.200 2.200 5.200 5.700 0 6.300-6.800 10.300-10.300 12.600z" /></Icon>
    <Gap $w={12} /><BarRule />
    <Gap $w={16} /><AbpBadge>ABP</AbpBadge>
    <Gap $w={25} /><FlameSlot><Icon w={20} stroke="none"><path fill="#a6a6a6" d="M10 0c1 4 4 5 5 7l3-2c-1 4 2 6 2 9s-3 6-10 6-10-3-10-6 2-5 2-9l3 2c1-3 5-4 5-7z" /><circle cx="7" cy="12" r="2.500" fill="#e8e8e8" /><circle cx="13" cy="12" r="2.500" fill="#e8e8e8" /><circle cx="7.500" cy="12.500" r="1.200" fill="#444" /><circle cx="12.500" cy="12.500" r="1.200" fill="#444" /></Icon><OffBadge>off</OffBadge></FlameSlot>
    <Gap $w={16} /><Icon w={20} h={21} sw={1.8}><path d="M10 1l9 4.500v10L10 20l-9-4.500v-10zM1 5.500l9 4.500 9-4.500M10 10v10" strokeLinejoin="round" /></Icon>
    <Gap $w={28} /><Icon w={20} h={19} sw={2}><path d="M10 0v13M5.500 8.500 10 13l4.500-4.500M1 12.500V16c0 1.500.7 2 2 2h14c1.300 0 2-.5 2-2v-3.500" /></Icon>
    <Gap $w={28} /><Icon w={20} h={18} sw={2}><path d="M0 3h20M0 9h20M0 15h20M14 0v6M6 6v6M12 12v6" /></Icon>
  </AddressBar>
);

const Header = () => (
  <AwsHeader>
    <Gap $w={55} />
    <Icon w={49} h={30} stroke="none">
      <defs><linearGradient id="awsFill" gradientUnits="userSpaceOnUse" x1="0" y1="0" x2="0" y2="512"><stop offset=".56" stopColor="#fff" /><stop offset=".56" stopColor="#ff9d1c" /></linearGradient></defs>
      <FaAws x="0" y="-9.900" size={49} fill="url(#awsFill)" />
    </Icon>
    <Gap $w={52} /><NavLabel $size={21} $w={91.5} $drop={1}>Services</NavLabel><Down w={15} h={12} />
    <Gap $w={142} />
    <SearchBox><Icon w={20} h={22} stroke="#d5dbdb" sw={3}><circle cx="8.500" cy="9" r="7" /><path d="M13 14.500l6 6" /></Icon><em>Search for services, features, marketplace products, and docs</em>[Alt+S]</SearchBox>
    <Gap $w={133} /><Icon w={24} stroke="#d5dbdb" sw={2.4}><rect x="1.200" y="1.200" width="21.600" height="21.600" rx="3" /><path d="M6.500 6l6.500 6-6.500 6M14 18.500h6" /></Icon>
    <Gap $w={30} /><Icon w={24} stroke="#d5dbdb" sw={2.2}><path d="M12 1v3M1 17.500c4-3 3.500-5.500 4-8.500S8.500 4 12 4s6.500 2 7 5 0 5.500 4 8.500zM8.500 18c0 3 1 4.700 3.500 4.700s3.500-1.700 3.500-4.700" strokeLinejoin="round" /></Icon>
    <Gap $w={27} /><NavLabel $size={18} $w={110}>romanshved</NavLabel><Down w={13} h={12} />
    <Gap $w={39.5} /><NavLabel $size={18} $w={49}>Ohio</NavLabel><Down w={13} h={12} />
    <Gap $w={39} /><NavLabel $size={18} $w={75}>Support</NavLabel><Down w={13} h={12} />
  </AwsHeader>
);

const TableList = () => (
  <ListPane>
    <ButtonRow><Button $w={165} $primary>Create table</Button><Button $w={163} $ls={0.05}>Delete table</Button></ButtonRow>
    <FilterPanel>
      <FilterInput>
        <Icon w={27} stroke="#757575" sw={2.6}><circle cx="11" cy="10.500" r="9.300" /><path d="M18 17.500l6.500 6.500" strokeWidth="5" strokeLinecap="round" /></Icon>
        <span>Filter by table name</span>
        <Lines w={21} d="M1 1l19 19M20 1 1 20" sw={3.6} c="#3d3d3d" />
      </FilterInput>
      <FilterRow>
        <Select><span>Choose a table ...</span><Down w={16} h={9} c="#3a3a3a" /></Select>
        <ActionsButton $w={154} $h={77} $ls={-0.1}>Actions<Lines w={14} h={8} d="M1 1l6 6 6-6" sw={1.8} c="#444" /></ActionsButton>
      </FilterRow>
    </FilterPanel>
    <TableHead><HeadRadioCell /><HeadNameCell>Name<Icon w={11} h={7} stroke="none"><path fill="#444" d="M5.500 0 11 6H0z" /></Icon></HeadNameCell></TableHead>
    <TableRow><Radio /><span>table1</span></TableRow>
    <HScroll><Lines w={6} h={9} d="M5 .5 1 4.500l4 4" c="#bdbdbd" /><HThumb /><Lines w={6} h={9} d="M1 .5l4 4-4 4" sw={2} c="#777" /></HScroll>
  </ListPane>
);

const Detail = () => (
  <DetailPane>
    <TitleRow>
      <Title>table1</Title><CloseLink>Close</CloseLink>
      <Segments>
        <Segment $on><Icon w={21} h={23} stroke="none"><path fill="#333" d="M0 0h21v23H0z" /><path fill="#eee" d="M3 3h7v17H3z" /></Icon></Segment>
        <Segment><Icon w={21} h={23} stroke="none"><path fill="#333" d="M0 1h21v22H0z" /><path fill="#eee" d="M2.500 4h16v8h-16z" /></Icon></Segment>
        <Segment><Icon w={20} h={23} stroke="none"><path fill="#444" d="M0 0h20v23H0z" /></Icon></Segment>
      </Segments>
      <HelpButton><Icon w={25} stroke="none"><circle cx="12.500" cy="12.500" r="12.500" fill="#444" /><path d="M8 9.500c0-3 2-4.500 4.500-4.500S17 6.500 17 9s-4.500 3-4.500 6" stroke="#fff" strokeWidth="3" fill="none" /><rect x="10.800" y="17" width="3.500" height="3.500" fill="#fff" /></Icon></HelpButton>
    </TitleRow>
    <Tabs>
      <Tab $w={131} $on $ls={-0.09}>Overview</Tab><Tab $w={94}>Items</Tab><Tab $w={112}>Metrics</Tab><Tab $w={111}>Alarms</Tab>
      <Tab $w={126} $ls={-0.17}>Capacity</Tab><Tab $w={117}>Indexes</Tab><Tab $w={175}>Global Tables</Tab><Tab $w={127}>Backups</Tab>
      <MoreTab>More<Lines w={14} h={8} d="M1 1l6 6 6-6" sw={1.8} c="#444" /></MoreTab>
    </Tabs>
    <DetailScroll>
      <DetailBody>
        <SectionTitle>Recent alerts</SectionTitle>
        <Paragraph $h={67} $muted>No CloudWatch alarms have been triggered for this table.</Paragraph>
        <SectionTitle>Kinesis data stream details</SectionTitle>
        <Paragraph $h={44}>Use Amazon Kinesis Data Streams for DynamoDB to capture item-level changes in your table as a Kinesis data stream.<LearnMore>Learn more</LearnMore></Paragraph>
        <Fields $label={551} $line={34} $top={15} $gap={33}>
          <dt>Stream enabled</dt><dd>No</dd><dt>Stream name</dt><dd>-</dd>
        </Fields>
        <FieldAction $h={76}><Button $w={335} $ls={0.02}>Manage streaming to Kinesis</Button></FieldAction>
        <SectionTitle>DynamoDB stream details</SectionTitle>
        <Fields $label={553} $line={32} $top={17} $gap={35}>
          <dt>Stream enabled</dt><dd>No</dd><dt>View type</dt><dd>-</dd><dt>Latest stream ARN</dt><dd>-</dd>
        </Fields>
        <FieldAction $h={76}><Button $w={316}>Manage DynamoDB stream</Button></FieldAction>
      </DetailBody>
      <VScroll>
        <ArrowCell><Lines w={9} h={6} d="M.5 5 4.500 1l4 4" sw={1.5} c="#a8a8a8" /></ArrowCell><VThumb />
        <ArrowCell><Lines w={9} h={6} d="M.5 1l4 4 4-4" sw={2} c="#555" /></ArrowCell>
      </VScroll>
    </DetailScroll>
  </DetailPane>
);

const Taskbar = () => (
  <TaskBar>
    <LogoBox><Icon w={24} stroke="none" fill="#fff"><path d="M0 3.200 10 2v9.500H0zM11 1.800 24 0v11.500H11zM0 12.500h10V22L0 20.800zM11 12.500h13V24l-13-1.800z" /></Icon></LogoBox>
    {taskApps.map((a, i) => <TaskSlot key={i} $open={a.open} $active={a.active}>{a.icon}</TaskSlot>)}
    <Tray>
      <Gap $w={99} /><Icon w={36} h={33} stroke="none"><circle cx="16" cy="16" r="16" fill="#fff" /><circle cx="16" cy="16" r="13.500" fill="#0c93d6" /><path d="M11 12c0-4 2-5.500 5-5.500s5.500 2 5.500 5c0 4-5 4-5 8.500" stroke="#fff" strokeWidth="3.500" fill="none" /><circle cx="16.500" cy="24.500" r="2.200" fill="#fff" /><circle cx="28.500" cy="23.500" r="7.200" fill="#f40612" /><path d="M28.500 18.500v6M28.500 26v2.500" stroke="#fff" strokeWidth="2" /></Icon>
      <Gap $w={20} /><Lines w={19} h={11} d="M.7 10 9.500 1.200l8.800 8.800" sw={1.6} />
      <Gap $w={26} /><Icon w={25} h={18} sw={1.5}><path d="M1.500 4v4h5V4zM2.500 1v3M5.500 1v3M4 8v8.500h19V5.500H9" /><path d="M8.500 7.500h12.500v7H8.500z" fill="#fff" stroke="none" /><path d="M24 9v4" /></Icon>
      <Gap $w={26} /><Icon w={19} h={20} sw={1.3}><path d="M1 19C1 9 9 1 19 1M5.500 19c0-7.500 6-13.500 13.500-13.500M10 19c0-5 4-9 9-9" stroke="#c9ccd3" /><path d="M14 19c0-3 2-5 5-5" strokeWidth="1.500" /><circle cx="17.500" cy="17.500" r="1.800" fill="#fff" stroke="none" /></Icon>
      <Gap $w={26} /><Icon w={23} h={20} sw={1.4}><path d="M1 7h3.500L9 1.500v17L4.500 13H1zM12 7.500c1.500 1.500 1.500 3.500 0 5" /><path d="M15 5c3 3 3 7 0 10M18.500 2.500c4 4.500 4 10.500 0 15" stroke="#8a90a0" /></Icon>
      <Language>ENG</Language>
      <Clock>14:49<br /><span>3/31/2021</span></Clock>
      <NoticeSlot><Icon w={25} h={26} stroke="#1d2438" sw={1.6}><path d="M0 0h25v20H13v6L8 20H0z" fill="#fff" stroke="none" /><path d="M5 6h15M5 10h15M5 14h10" /></Icon><NoticeCount>1</NoticeCount></NoticeSlot>
    </Tray>
  </TaskBar>
);

export default function App() {
  return (
    <Screen>
      <GlobalStyle />
      <BrowserWindow>
        <Sidebar />
        <BrowserMain>
          <Strip />
          <Toolbar />
          <Bookmarks>
            <Bookmark $w={192}><Doc />gt_2010_3_19.pdf</Bookmark>
            <Bookmark $w={190}><Doc />замки курсова.pdf</Bookmark>
          </Bookmarks>
          <Header />
          <Console>
            <Rail>
              <RailEdge $h={15} />
              <RailHandle><Icon w={9} h={17} stroke="none"><path fill="#999" d="M0 0l9 8.500L0 17z" /></Icon></RailHandle>
              <RailEdge />
            </Rail>
            <TableList />
            <Splitter>
              <Icon w={6} h={28} stroke="none" fill="#999">{[1, 8.5, 16, 23.5].map(y => <g key={y}><rect x="0" y={y} width="2" height="2" /><rect x="3" y={y + 2} width="2" height="2" /></g>)}</Icon>
            </Splitter>
            <Detail />
          </Console>
          <AwsFooter>
            <FooterLabel $w={116.5} $up>Feedback</FooterLabel>
            <FooterLabel $w={112.5}>English (US)</FooterLabel>
            <FooterCaret><Down w={14} h={12} /></FooterCaret>
            <Gap $w={485} />
            <Copyright>© 2008 - 2021, Amazon Web Services, Inc. or its affiliates. All rights reserved.</Copyright>
            <FooterLabel $w={156.5}>Privacy Policy</FooterLabel>
            <FooterLabel $w={146}>Terms of Use</FooterLabel>
            <FooterLabel $w={160} $up>Cookie preferences</FooterLabel>
          </AwsFooter>
        </BrowserMain>
      </BrowserWindow>
      <Taskbar />
    </Screen>
  );
}
